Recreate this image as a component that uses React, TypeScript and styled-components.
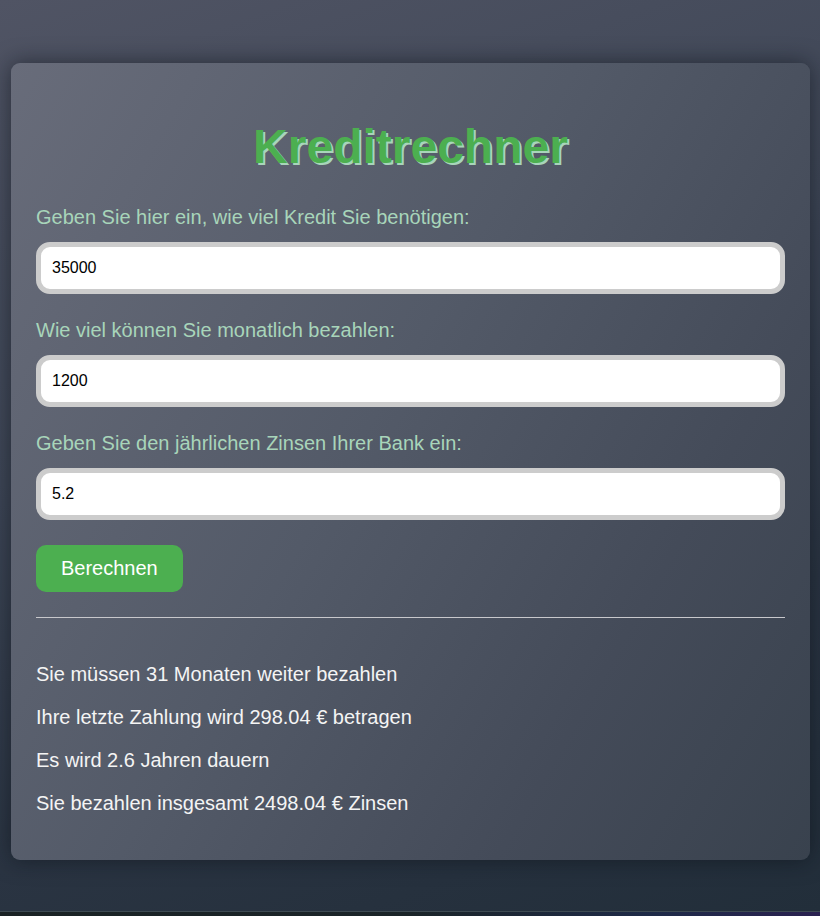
import React from "react";
import styled, { createGlobalStyle } from "styled-components";

const GlobalStyle = createGlobalStyle`
  html, body {
    margin: 0;
    padding: 0;
    background: #1a2228;
  }
  body {
    font-family: "Liberation Sans", Arial, sans-serif;
  }
  * { box-sizing: border-box; }
`;

const Page = styled.div`
  min-height: 911px;
  padding-top: 63px;
  background: linear-gradient(160deg, #505464 0%, #3e4656 40%, #2a3442 72%, #222e3a 100%);
`;

const Card = styled.main`
  width: 799px;
  margin: 0 10px 0 11px;
  padding: 25px;
  border-radius: 9px;
  background: linear-gradient(120deg, #686c7a 0%, #535a68 45%, #444b59 75%, #39424e 100%);
  box-shadow: 0 0 22px rgba(10, 14, 22, 0.55);
`;

const Title = styled.h1`
  margin: 31px 0 32px;
  font-size: 48px;
  font-weight: 700;
  text-align: center;
  color: #4caf50;
  text-shadow: 2px 2px 0 #a8d5ba;
`;

const Field = styled.div`
  display: flex;
  flex-direction: column;
  gap: 13px;
  margin-bottom: 25px;
`;

const Label = styled.label`
  font-size: 20px;
  color: #a8d5ba;
`;

const Input = styled.input`
  width: 100%;
  height: 52px;
  padding: 12px 11px;
  border: 5px solid #cccccc;
  border-radius: 14px;
  background: #ffffff;
  font-family: "Liberation Sans", Arial, sans-serif;
  font-size: 16px;
  color: #000;
  outline: none;
`;

const Button = styled.button`
  padding: 12px 25px;
  border: none;
  border-radius: 10px;
  background: #4caf50;
  color: #ffffff;
  font-family: "Liberation Sans", Arial, sans-serif;
  font-size: 20px;
  cursor: pointer;
`;

const Divider = styled.hr`
  margin: 25px 0 0;
  border: none;
  border-top: 1px solid #c8c8cc;
`;

const Results = styled.section`
  padding-top: 25px;
`;

const ResultLine = styled.p`
  margin: 20px 0;
  font-size: 20px;
  color: #f4f4f4;
`;

const Strip = styled.div`
  height: 5px;
  border-top: 1px solid #3e4b52;
  background: linear-gradient(90deg, #1a2224 0%, #1a2428 50%, #1e2a48 80%, #2a2150 100%);
`;

const fields = [
  { id: "kredit", label: "Geben Sie hier ein, wie viel Kredit Sie benötigen:", value: "35000" },
  { id: "monat", label: "Wie viel können Sie monatlich bezahlen:", value: "1200" },
  { id: "zins", label: "Geben Sie den jährlichen Zinsen Ihrer Bank ein:", value: "5.2" },
];

const results = [
  "Sie müssen 31 Monaten weiter bezahlen",
  "Ihre letzte Zahlung wird 298.04 € betragen",
  "Es wird 2.6 Jahren dauern",
  "Sie bezahlen insgesamt 2498.04 € Zinsen",
];

export default function App() {
  return (
    <>
      <GlobalStyle />
      <Page>
        <Card>
          <Title>Kreditrechner</Title>
          {fields.map((f) => (
            <Field key={f.id}>
              <Label htmlFor={f.id}>{f.label}</Label>
              <Input id={f.id} defaultValue={f.value} />
            </Field>
          ))}
          <Button type="button">Berechnen</Button>
          <Divider />
          <Results>
            {results.map((r) => (
              <ResultLine key={r}>{r}</ResultLine>
            ))}
          </Results>
        </Card>
      </Page>
      <Strip />
    </>
  );
}
